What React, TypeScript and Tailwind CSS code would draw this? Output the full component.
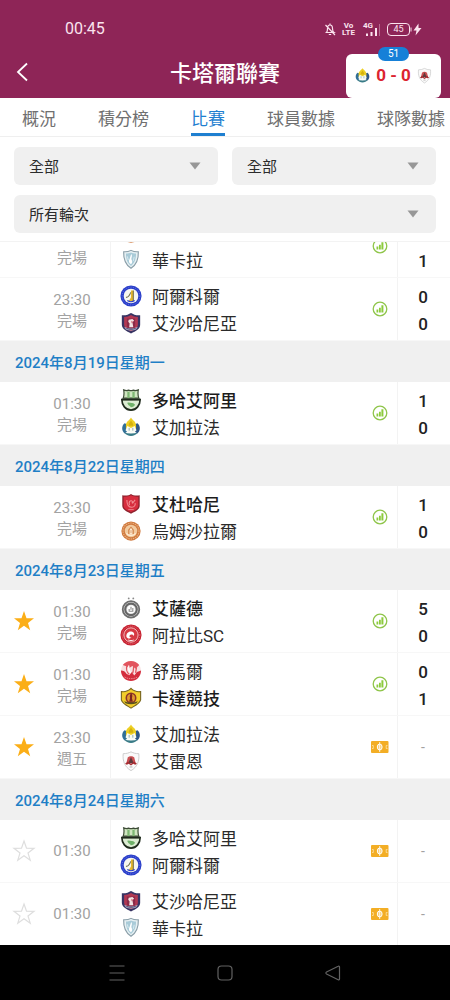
import { useLayoutEffect, useRef, type ReactNode } from "react";

type TeamId =
  | "wakrah" | "khor" | "shahania" | "ahli" | "gharafa" | "duhail" | "ummsalal"
  | "sadd" | "arabi" | "shamal" | "qatar" | "rayyan";

const names: Record<TeamId, string> = {
  wakrah: "華卡拉",
  khor: "阿爾科爾",
  shahania: "艾沙哈尼亞",
  ahli: "多哈艾阿里",
  gharafa: "艾加拉法",
  duhail: "艾杜哈尼",
  ummsalal: "烏姆沙拉爾",
  sadd: "艾薩德",
  arabi: "阿拉比SC",
  shamal: "舒馬爾",
  qatar: "卡達競技",
  rayyan: "艾雷恩",
};

const crests: Record<TeamId, ReactNode> = {
  wakrah: (
    <>
      <path d="M4 3c3 .3 6-.5 8-1.500 2 1 5 1.800 8 1.500.3 8-1.500 14-8 18C5.500 17 3.700 11 4 3z" fill="#e6f0f3" stroke="#8a9ea8" strokeWidth="1.200" />
      <path d="M6.500 5c2 0 4-.5 5.500-1.300C13.500 4.500 15.500 5 17.500 5c0 6-1.500 10.500-5.500 13.500C8 15.500 6.500 11 6.500 5z" fill="#a9cbd8" />
      <path d="M12.500 5.500c1.500 3-1 4.500.5 7 1 1.800 0 3-1 4-2-1-3-3-1.800-5 1-1.800.8-3.800 2.300-6z" fill="#fff" />
      <path d="M8 8l1 4M15.500 8.500L14.500 13" stroke="#dcecf2" strokeWidth="1" />
    </>
  ),
  khor: (
    <>
      <circle cx="12" cy="12" r="11.500" fill="#2b3fc9" />
      <circle cx="12" cy="12" r="9.700" fill="none" stroke="#6f7eea" strokeWidth="1" strokeDasharray="1 1.500" />
      <circle cx="12" cy="12" r="8" fill="#f7f7f0" />
      <path d="M12 6h2.500v11.500H9.500l2.500-4z" fill="#e6b82e" />
      <path d="M14.500 6v11.500M6.500 13.500c2 0 4-2 5.200-5.500" stroke="#6b6a45" strokeWidth="1.100" fill="none" />
      <path d="M8 17c2.500 1.500 5.500 1.500 8 0" stroke="#2b3fc9" strokeWidth="1.200" fill="none" />
    </>
  ),
  shahania: (
    <>
      <path d="M2 3.500C6 4 9.500 2.500 12 1c2.500 1.500 6 3 10 2.500V14c0 4.500-4.500 7-10 9.500C7 21 2 18.500 2 14z" fill="#383463" />
      <path d="M4.500 5.500c3 0 5.500-1 7.500-2.200C14 4.500 16.500 5.500 19.500 5.500V14c0 3-3.500 5-7.500 7-4-2-7.500-4-7.500-7z" fill="#b23853" />
      <path d="M7.500 7h9v9.500L12 19l-4.500-2.500z" fill="#8b2a49" />
      <path d="M9.500 8.500l4-1 2 2-2 1.500 1 5.500h-4.500l.5-4-1.500-2z" fill="#f3e4e4" />
      <path d="M12.500 9.500l1.200 1-1 2z" fill="#cf3b46" />
      <path d="M4.500 16c5 2.500 10 2.500 15 0l-2 3.200c-3.500 1.300-7.500 1.300-11 0z" fill="#b9b8cc" />
      <path d="M7 18c3.500 1 6.500 1 10 0" stroke="#383463" strokeWidth="1" fill="none" />
    </>
  ),
  ahli: (
    <>
      <path d="M4 1c2 .8 4 .9 5.500.2 1.500.8 3.500.8 5 0 1.500.7 3.500.6 5.500-.2-.6 3-.5 6 .5 9h-17c1-3 1.100-6 .5-9z" fill="#cfe6c0" stroke="#3c4b35" strokeWidth="1.300" />
      <path d="M8 3h2.500v7H8zM13.500 3H16v7h-2.500z" fill="#7fb874" />
      <path d="M2 11.500h20C22 17.500 18 23 12 23S2 17.500 2 11.500z" fill="#dcecd2" stroke="#1f2a1c" strokeWidth="1.800" />
      <path d="M2 10.500h20v2H2z" fill="#1f2a1c" />
      <path d="M8 15c2-1 3.500.5 5 .3s2.500 1 3.500 2c-1.500 2-3 2.700-4.500 2.700-1.200-2-3.500-2-4-5z" fill="#6fb169" />
    </>
  ),
  gharafa: (
    <>
      <path d="M5 8c-3.500 3-3.500 8 0 11l3-2V9z" fill="#316f97" />
      <path d="M19 8c3.500 3 3.500 8 0 11l-3-2V9z" fill="#2d5787" />
      <path d="M12 1.500c.7 2.500 5.500 4 5.500 8.500v4h-11v-4C6.500 5.500 11.300 4 12 1.500z" fill="#edcf24" />
      <path d="M12 5c1 2 2.500 3 2.500 5.500h-5C9.500 8 11 7 12 5z" fill="#d5b10d" />
      <path d="M8 11l4 2 4-2 2 4.500-2.500 2.500h-7L6 15.500z" fill="#f8faf2" />
      <path d="M10 13v3M14 13v3" stroke="#86a7b5" strokeWidth="1" />
      <path d="M4.500 18c4.500 1.500 10.500 1.500 15 0-3.500 5-11.500 5-15 0z" fill="#397b87" />
    </>
  ),
  duhail: (
    <>
      <path d="M2.500 2.500C7 3 10 2.500 12 1c2 1.500 5 2 9.500 1.500V14c0 4-4.500 6.500-9.500 8.500-5-2-9.500-4.500-9.500-8.500z" fill="#8d222e" />
      <path d="M4 4c3.500.2 6.200-.3 8-1.500 1.800 1.200 4.500 1.700 8 1.500v10c0 3-3.500 5-8 6.800C7.500 19 4 17 4 14z" fill="#d72d3e" />
      <path d="M7.500 7.500c0 6 2 8 5.500 8 2.500 0 4-2 3.500-4.500M10.500 13c-1.500-3 .5-5 2-4.500s1.500 2 .3 2.500M13.500 11.500l3-4" stroke="#f18b91" strokeWidth="1.200" fill="none" />
      <path d="M9 18h6" stroke="#e87c84" strokeWidth="1" />
    </>
  ),
  ummsalal: (
    <>
      <circle cx="12" cy="12" r="10.500" fill="#d07a3f" />
      <circle cx="12" cy="12" r="8.700" fill="none" stroke="#eab382" strokeWidth="1.200" strokeDasharray="1.500 1" />
      <circle cx="12" cy="12" r="6.800" fill="#f2cba0" />
      <path d="M9 15.500v-5l3-3.500 3 3.500v5z" fill="#cf7e43" />
      <path d="M11 15v-4l1-1.500 1 1.500v4zM7 14.500c2.500 3 7.500 3 10 0" stroke="#fff0d9" strokeWidth="1.200" fill="none" />
    </>
  ),
  sadd: (
    <>
      <circle cx="9.500" cy="1.500" r="1" fill="#898989" />
      <circle cx="14.500" cy="1.500" r="1" fill="#898989" />
      <circle cx="12" cy="13.500" r="9" fill="#e4e4e4" stroke="#6e6e6e" strokeWidth="2" />
      <circle cx="12" cy="13.500" r="6.300" fill="none" stroke="#666" strokeWidth="2.300" />
      <circle cx="12" cy="13.500" r="4.200" fill="#fff" />
      <path d="M10 13v2.500h4V12M12 10.500V14" stroke="#8b8b8b" strokeWidth="1.200" fill="none" />
    </>
  ),
  arabi: (
    <>
      <circle cx="12" cy="12" r="11.500" fill="#c8202f" />
      <circle cx="12" cy="12" r="9.700" fill="none" stroke="#dd7880" strokeWidth="1" strokeDasharray="1.200 1" />
      <circle cx="12" cy="12" r="7.800" fill="#d63a43" stroke="#f4c9ca" strokeWidth="1" />
      <path d="M7 14c-.5-4 3-7 6.500-5.500 2 .8 2.500 3 1.500 4.500-1.200-2-3.500-2-4.500-.5-.8 1.200.5 2.500 2 2-1.500 2-4.500 2-5.500-.5z" fill="#fff" />
      <path d="M9 17.500c2 .8 4 .8 6 0" stroke="#fff" strokeWidth="1" fill="none" />
    </>
  ),
  shamal: (
    <>
      <circle cx="12" cy="12" r="11" fill="#f8e2e3" />
      <path d="M3 5.500C5.500 2.500 8.500 1 12 1s6.500 1.500 9 4.500l-4 4-3.500-3-3 2-3-1.500z" fill="#e2545e" />
      <path d="M1 11.500c3 0 4.500 1 6 3.500l3 1.500L13 13l2.500 4 3-4 4.500-1.500C22.500 19 17.500 23 12 23S1.500 19 1 11.500z" fill="#d42d3d" />
      <path d="M7.500 6.500c-1 3 0 7 2.500 9M15.500 5c-1.500 3 0 6-2 10M18 8l-1 6" stroke="#e2545e" strokeWidth="1.400" fill="none" />
      <path d="M9.500 6c-.5 3 .5 6 2 8" stroke="#fff" strokeWidth="1.400" fill="none" />
      <path d="M5 18.500c4 2.500 10 2.500 14 0" stroke="#eb949b" strokeWidth="1" fill="none" strokeDasharray="1.500 1" />
    </>
  ),
  qatar: (
    <>
      <path d="M1.500 5c4 .5 8-1 10.500-3.500C14.500 4 18.500 5.500 22.500 5v9c-1 4-5.500 6-10.500 9-5-3-9.500-5-10.500-9z" fill="#f2cd2a" stroke="#77651e" strokeWidth="1.200" />
      <circle cx="12" cy="12" r="6" fill="#8b332a" />
      <circle cx="12" cy="12" r="4.300" fill="#e0992d" />
      <path d="M12 6.500c2 2 1.500 4 1 5.500l1 4h-4l1-4c-.8-2 0-3.500 1-5.500z" fill="#7b241e" />
      <path d="M4.500 15.500c5 2 10 2 15 0l-1.500 2.200c-3.500 1.600-8.500 1.600-12 0z" fill="#5b531f" />
    </>
  ),
  rayyan: (
    <>
      <path d="M3.500 4C7 4 9.500 3.300 12 2c2.500 1.300 5 2 8.500 2 .8 8-1.500 14.500-8.500 18.500C5 18.500 2.700 12 3.500 4z" fill="#fafafa" stroke="#c9c9c9" strokeWidth="1" />
      <path d="M8.500 8C10 6.300 14 6.300 15.500 8l1.500 6H7z" fill="#cb5053" />
      <path d="M12 7.500l3 7H9z" fill="#5d3a3d" />
      <path d="M5.500 15l3-2.500L12 15l3.500-2.500 3 2.500-2 1-2-1-2.500 2L9.500 15l-2 1z" fill="#a52c32" />
      <path d="M10.500 18.500h3" stroke="#aaa" strokeWidth="1" />
    </>
  ),
};

function Crest({ team, className }: { team: TeamId; className: string }) {
  return (
    <svg viewBox="0 0 24 24" className={className} aria-hidden="true">
      {crests[team]}
    </svg>
  );
}

type Match = {
  time: string;
  status?: string;
  home: TeamId;
  away: TeamId;
  score?: [number, number];
  favourite?: boolean;
};

const days: { date?: string; matches: Match[] }[] = [
  {
    matches: [
      { time: "21:30", status: "完場", home: "ummsalal", away: "wakrah", score: [1, 1] },
      { time: "23:30", status: "完場", home: "khor", away: "shahania", score: [0, 0] },
    ],
  },
  { date: "2024年8月19日星期一", matches: [{ time: "01:30", status: "完場", home: "ahli", away: "gharafa", score: [1, 0] }] },
  { date: "2024年8月22日星期四", matches: [{ time: "23:30", status: "完場", home: "duhail", away: "ummsalal", score: [1, 0] }] },
  {
    date: "2024年8月23日星期五",
    matches: [
      { time: "01:30", status: "完場", home: "sadd", away: "arabi", score: [5, 0], favourite: true },
      { time: "01:30", status: "完場", home: "shamal", away: "qatar", score: [0, 1], favourite: true },
      { time: "23:30", status: "週五", home: "gharafa", away: "rayyan", favourite: true },
    ],
  },
  {
    date: "2024年8月24日星期六",
    matches: [
      { time: "01:30", home: "ahli", away: "khor", favourite: false },
      { time: "01:30", home: "shahania", away: "wakrah", favourite: false },
    ],
  },
];

function StatsIcon() {
  return (
    <svg viewBox="0 0 16 16" className="size-4" aria-hidden="true">
      <circle cx="8" cy="8" r="6.800" fill="none" stroke="#8fc54a" strokeWidth="1.300" />
      <path d="M4.500 8.500h1.800v3H4.500zM7 6.800h1.800v4.700H7zM9.400 4.300h2v7.200h-2z" fill="#8ccb3c" />
    </svg>
  );
}

function PitchIcon() {
  return (
    <svg viewBox="0 0 18 12" className="h-3 w-[18px]" aria-hidden="true">
      <rect width="17.500" height="12" rx="1" fill="#f3ae25" />
      <ellipse cx="8.700" cy="6" rx="2.400" ry="3" fill="#f9cf78" stroke="#fff" strokeWidth="1" />
      <path d="M8.700 1v10" stroke="#fff" strokeWidth=".8" />
      <path d="M1 4.500h1.300v3H1M16.500 4.500h-1.300v3h1.300" stroke="#fce3ae" strokeWidth=".8" fill="none" />
    </svg>
  );
}

function Star({ on }: { on: boolean }) {
  return (
    <svg viewBox="0 0 24 24" className="size-6" aria-hidden="true">
      <path
        d="M12 2l2.500 7.200 7.500.1-6 4.600 2.200 7.300L12 16.800l-6.200 4.400L8 13.900 2 9.300l7.500-.1z"
        fill={on ? "#fbae17" : "none"}
        stroke={on ? "none" : "#dedede"}
        strokeWidth="1.200"
      />
    </svg>
  );
}

function MatchRow({ match }: { match: Match }) {
  const { score } = match;
  const sides: [TeamId, boolean][] = [
    [match.home, !!score && score[0] > score[1]],
    [match.away, !!score && score[1] > score[0]],
  ];
  return (
    <li className="flex h-[63px] items-stretch border-b border-[#f7f7f7] bg-white">
      <div className="flex w-12 items-center justify-center">
        {match.favourite !== undefined && (
          <button aria-label="收藏" aria-pressed={match.favourite}>
            <Star on={match.favourite} />
          </button>
        )}
      </div>
      <div className="flex w-12 flex-col items-center justify-center text-[15px] leading-[21px] text-[#a2a2a2]">
        <span className={match.status ? "pt-1" : ""}>{match.time}</span>
        {match.status && <span>{match.status}</span>}
      </div>
      <div className="ml-[14px] flex min-w-0 flex-1 flex-col justify-center border-l border-[#f3f3f3] pl-[9px]">
        {sides.map(([team, winner]) => (
          <div key={team} className="flex h-[27px] items-center gap-[10px]">
            <Crest team={team} className="size-[22px] shrink-0" />
            <span className={winner ? "pt-1 text-[17px] font-medium whitespace-nowrap text-[#1c1c1c]" : "pt-1 text-[17px] whitespace-nowrap text-[#2a2a2a]"}>
              {names[team]}
            </span>
          </div>
        ))}
      </div>
      <div className="flex w-9 items-center justify-center pl-0.5">{score ? <StatsIcon /> : <PitchIcon />}</div>
      <div className="flex w-[53px] flex-col items-center justify-center border-l border-[#f3f3f3] pr-0.5 text-[17px] leading-[27px] font-medium text-[#222]">
        {score ? (
          <>
            <span className="pt-1">{score[0]}</span>
            <span>{score[1]}</span>
          </>
        ) : (
          <span className="text-sm font-normal text-[#a2a2a2]">-</span>
        )}
      </div>
    </li>
  );
}

function Filter({ label, value }: { label: string; value: string }) {
  return (
    <label className="relative block flex-1">
      <span className="sr-only">{label}</span>
      <select className="h-[38px] w-full appearance-none rounded-md bg-[#f0f0f0] px-[15px] pt-0.5 text-[15px] leading-9 text-[#2c2c2c]">
        <option>{value}</option>
      </select>
      <svg viewBox="0 0 12 8" className="pointer-events-none absolute top-[15px] right-[17px] h-2 w-3" aria-hidden="true">
        <path d="M.5.500h11L6 7.500z" fill="#979797" />
      </svg>
    </label>
  );
}

function StatusBar() {
  return (
    <div className="flex h-[46px] items-center justify-between pt-3 pr-[28px] pl-[65px] text-[#fbe3ee]">
      <span className="text-base">00:45</span>
      <div className="flex items-center">
        <svg viewBox="0 0 12 13" className="h-[13px] w-3" fill="none" stroke="currentColor" strokeWidth="1.200" aria-hidden="true">
          <path d="M2.500 9.500c1-1 1-2 1-4C3.500 3 4.500 2 6 2s2.500 1 2.500 3.500c0 2 0 3 1.500 4H1.500M6 .5V2M4.800 11.500h2.400M1.500 2L11 12" />
        </svg>
        <span className="ml-[6px] flex flex-col items-center text-[8px] leading-[7px] font-bold">
          <span>Vo</span>
          <span>LTE</span>
        </span>
        <span className="relative ml-[8px] h-[13px] w-[17px]">
          <span className="absolute -top-0.5 left-0 text-[8px] leading-[10px] font-bold">4G</span>
          <svg viewBox="0 0 17 13" className="size-full" aria-hidden="true">
            <path d="M3 10.500h2V13H3zM7.500 9h2v4h-2zM12 5h2v8h-2z" fill="currentColor" />
            <path d="M16.500 1v12" stroke="#b66a8e" strokeWidth="1" />
          </svg>
        </span>
        <span className="ml-[7px] flex h-[13px] w-[23px] items-center justify-center rounded-[4px] border border-current text-[9px] leading-[11px]">45</span>
        <svg viewBox="0 0 12 13" className="h-[13px] w-3" fill="currentColor" aria-hidden="true">
          <path d="M.5 4.500h1v4h-1zM8.500.5L3.500 7.500h3L5.500 12.500l6-7.500h-3z" />
        </svg>
      </div>
    </div>
  );
}

const tabs = ["概況", "積分榜", "比賽", "球員數據", "球隊數據"];

export default function App() {
  const list = useRef<HTMLElement>(null);

  // Open with the earliest fixture partly scrolled away.
  useLayoutEffect(() => {
    if (list.current) list.current.scrollTop = 27;
  }, []);

  return (
    <div className="flex h-screen flex-col bg-white font-[Roboto,'Noto_Sans_CJK_TC',sans-serif]">
      <header className="bg-[#8e2557]">
        <StatusBar />
        <div className="grid h-[52px] grid-cols-[1fr_auto_1fr] items-center">
          <button aria-label="返回" className="ml-4 w-3 text-white">
            <svg viewBox="0 0 12 20" className="h-5 w-3" fill="none" stroke="currentColor" strokeWidth="1.800" aria-hidden="true">
              <path d="M11 1.500L2 10l9 8.500" />
            </svg>
          </button>
          <h1 className="pt-0.5 text-[22px] font-medium text-white">卡塔爾聯賽</h1>
          <a href="#live" className="relative mt-[7px] mr-[9px] flex h-11 w-[95px] items-center justify-center gap-[5px] justify-self-end rounded-md bg-white">
            <span className="absolute -top-[7px] left-8 h-[14px] w-[31px] rounded-full bg-[#1680d8] text-center text-[10px] leading-[14px] text-white">51</span>
            <Crest team="gharafa" className="size-[17px]" />
            <span className="text-[17px] font-bold whitespace-nowrap text-[#dc2430]">0 - 0</span>
            <Crest team="rayyan" className="size-[17px]" />
          </a>
        </div>
      </header>

      <nav className="flex h-[39px] shrink-0 gap-[42px] overflow-hidden border-b border-[#efefef] pl-[22px] text-[17px] whitespace-nowrap text-[#707070]">
        {tabs.map((tab) => (
          <a
            key={tab}
            href="#tab"
            className={
              tab === "比賽"
                ? "flex items-center border-b-[3px] border-[#1f7fd0] pt-2 text-[#1f7fd0]"
                : "flex items-center border-b-[3px] border-transparent pt-2"
            }
          >
            {tab}
          </a>
        ))}
      </nav>

      <div className="flex flex-col gap-[10px] border-b border-[#f3f3f3] px-[14px] pt-[10px] pb-2">
        <div className="flex gap-[14px]">
          <Filter label="球隊" value="全部" />
          <Filter label="狀態" value="全部" />
        </div>
        <Filter label="輪次" value="所有輪次" />
      </div>

      <main ref={list} className="min-h-0 flex-1 overflow-y-auto [scrollbar-width:none]">
        {days.map((day, i) => (
          <section key={day.date ?? i}>
            {day.date && (
              <h2 className="h-[41px] bg-[#f0f0f0] px-[15px] pt-0.5 text-[15px] leading-[41px] font-medium text-[#1f7fc6]">{day.date}</h2>
            )}
            <ul>
              {day.matches.map((match, j) => (
                <MatchRow key={j} match={match} />
              ))}
            </ul>
          </section>
        ))}
      </main>

      <footer className="flex h-[55px] shrink-0 items-center justify-center gap-[84px] bg-black text-[#626262]">
        <button aria-label="選單">
          <svg viewBox="0 0 24 24" className="size-6" fill="none" stroke="currentColor" strokeWidth="1.200" aria-hidden="true">
            <path d="M4.500 5h15M4.500 12h15M4.500 19h15" />
          </svg>
        </button>
        <button aria-label="主畫面">
          <svg viewBox="0 0 24 24" className="size-6" fill="none" stroke="currentColor" strokeWidth="1.200" aria-hidden="true">
            <rect x="5" y="5" width="14" height="14" rx="3.500" />
          </svg>
        </button>
        <button aria-label="返回上頁">
          <svg viewBox="0 0 24 24" className="size-6" fill="none" stroke="currentColor" strokeWidth="1.200" strokeLinejoin="round" aria-hidden="true">
            <path d="M18.500 6v12c0 .8-.6 1.200-1.300.8L5.500 13c-.8-.5-.8-1.500 0-2l11.700-5.800c.7-.4 1.300 0 1.300.8z" />
          </svg>
        </button>
      </footer>
    </div>
  );
}
